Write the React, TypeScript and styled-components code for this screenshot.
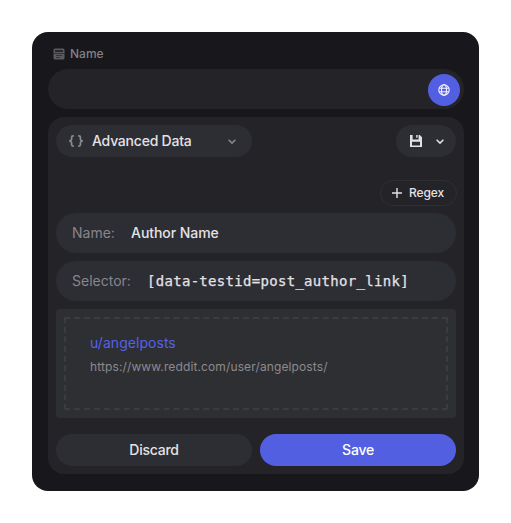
import React from "react";
import styled, { createGlobalStyle } from "styled-components";

const GlobalStyle = createGlobalStyle`
  * { box-sizing: border-box; }
  body { margin: 0; background: #fff; }
  button, input { font: inherit; color: inherit; border: 0; padding: 0; margin: 0; }
`;

const Page = styled.main`
  padding: 32px;
  font-family: Inter, "Open Sans", sans-serif;
  font-size: 14px;
  font-weight: 500;
  line-height: 20px;
  color: #e2e2e4;
`;

const Card = styled.section`
  width: 447px;
  height: 459px;
  padding: 12px 15px 17px 16px;
  border-radius: 16px;
  background: #18171c;
`;

const FieldLabel = styled.label`
  display: flex;
  align-items: center;
  gap: 5px;
  height: 20px;
  margin-bottom: 5px;
  padding-left: 5px;
  font-size: 12px;
  color: #828186;
`;

const NameField = styled.div`
  display: flex;
  align-items: center;
  height: 40px;
  padding: 2px 4px 0 20px;
  border-radius: 20px;
  background: #242328;
`;

const NameInput = styled.input`
  flex: 1;
  min-width: 0;
  background: transparent;
  outline: none;
`;

const RoundButton = styled.button`
  display: grid;
  place-items: center;
  width: 32px;
  height: 32px;
  border-radius: 50%;
  background: #535fe3;
  color: #f4f4ff;
`;

const Panel = styled.div`
  height: 357px;
  margin-top: 8px;
  padding: 8px;
  border-radius: 16px;
  background: #242328;
`;

const Toolbar = styled.div`
  display: flex;
  justify-content: space-between;
`;

const Select = styled.button`
  display: flex;
  align-items: center;
  width: 196px;
  height: 32px;
  padding: 0 14px 0 12px;
  border-radius: 16px;
  background: #2d2d34;
  color: #8a898d;
`;

const SelectText = styled.span`
  flex: 1;
  margin-left: 8px;
  text-align: left;
  color: #e2e2e4;
  letter-spacing: -0.22px;
`;

const SaveMenu = styled.button`
  display: flex;
  align-items: center;
  justify-content: space-between;
  width: 60px;
  height: 32px;
  padding: 0 10px 0 12px;
  border-radius: 16px;
  background: #2d2d34;
`;

const RegexRow = styled.div`
  display: flex;
  justify-content: flex-end;
  margin: 23px -1px 7px 0;
`;

const RegexButton = styled.button`
  display: flex;
  align-items: center;
  gap: 6px;
  width: 77px;
  height: 26px;
  padding-left: 10px;
  border: 1px solid #2f2e34;
  border-radius: 13px;
  background: transparent;
  font-size: 12px;
  line-height: 16px;
  letter-spacing: -0.1px;
`;

const Row = styled.div`
  display: flex;
  align-items: center;
  gap: 16px;
  height: 40px;
  margin-bottom: 8px;
  padding: 0 16px;
  border-radius: 20px;
  background: #2d2d34;
`;

const RowLabel = styled.span<{ $width: number }>`
  width: ${(p) => p.$width}px;
  font-weight: 400;
  color: #87868b;
  white-space: nowrap;
`;

const RowValue = styled.span`
  letter-spacing: -0.05px;
`;

const Code = styled.code`
  font-family: "DejaVu Sans Mono", monospace;
  font-size: 14px;
  letter-spacing: 0.3px;
  white-space: nowrap;
  -webkit-text-stroke: 0.25px currentColor;
`;

const Preview = styled.div`
  height: 109px;
  padding: 8px;
  border-radius: 4px;
  background: #2e2f33;
`;

const PreviewFrame = styled.div`
  height: 93px;
  padding: 14px 24px;
  border: 2px dashed #3b3b40;
  border-radius: 2px;
`;

const AuthorLink = styled.div`
  font-weight: 400;
  line-height: 20px;
  letter-spacing: 0.04px;
  color: #5661e8;
`;

const Address = styled.div`
  margin-top: 5px;
  font-size: 12px;
  line-height: 18px;
  font-weight: 400;
  letter-spacing: 0.12px;
  color: #8b8b8f;
`;

const Actions = styled.div`
  display: grid;
  grid-template-columns: 1fr 1fr;
  gap: 8px;
  margin-top: 16px;
`;

const ActionButton = styled.button<{ $primary?: boolean }>`
  height: 32px;
  border-radius: 16px;
  letter-spacing: -0.25px;
  background: ${(p) => (p.$primary ? "#535fe1" : "#2d2d34")};
  color: ${(p) => (p.$primary ? "#fff" : "#e2e2e4")};
`;

const FormIcon = () => (
  <svg width="12" height="12" viewBox="0 0 12 12" fill="none">
    <rect x="0.5" y="0.5" width="11" height="11" rx="1.5" fill="#5b5a5f" />
    <path d="M2 2h8v2H2zM0.5 5.2h11v0.7H0.5zM3 7.2h6v0.8H3zM3 9.2h4v0.8H3z" fill="#29282d" />
  </svg>
);

const GlobeIcon = () => (
  <svg width="12" height="12" viewBox="0 0 12 12" fill="none" stroke="currentColor" strokeWidth="1.1">
    <circle cx="6" cy="6" r="5.2" />
    <ellipse cx="6" cy="6" rx="2.5" ry="5.2" />
    <path d="M1.3 4.2h9.4M1.3 7.8h9.4" />
  </svg>
);

const BracesIcon = () => (
  <svg width="16" height="14" viewBox="0 0 16 14" fill="none" stroke="currentColor" strokeWidth="1.7">
    <path d="M5.8 1.9H5Q3.6 1.9 3.6 3.2V5Q3.6 6.6 1.3 7Q3.6 7.4 3.6 9V10.8Q3.6 12.1 5 12.1H5.8" />
    <path d="M10.2 1.9H11Q12.4 1.9 12.4 3.2V5Q12.4 6.6 14.7 7Q12.4 7.4 12.4 9V10.8Q12.4 12.1 11 12.1H10.2" />
  </svg>
);

const ChevronIcon = () => (
  <svg width="12" height="12" viewBox="0 0 12 12" fill="none" stroke="currentColor" strokeWidth="1.5">
    <path d="M2.6 4.8L6 8.1L9.4 4.8" />
  </svg>
);

const DiskIcon = () => (
  <svg width="16" height="16" viewBox="0 0 16 16" fill="currentColor">
    <path
      fillRule="evenodd"
      d="M2 2H4.6V6.4H10.6V2H11.8L14 4.2V14H2ZM4 8.8V12.5H12V8.8Z"
    />
    <path d="M8.2 2h1.4v2.8H8.2z" />
  </svg>
);

const PlusIcon = () => (
  <svg width="12" height="12" viewBox="0 0 12 12" stroke="currentColor" strokeWidth="1.4">
    <path d="M6 1v10M1 6h10" />
  </svg>
);

export default function App() {
  return (
    <Page>
      <GlobalStyle />
      <Card>
        <FieldLabel htmlFor="name">
          <FormIcon />
          Name
        </FieldLabel>
        <NameField>
          <NameInput id="name" />
          <RoundButton><GlobeIcon /></RoundButton>
        </NameField>
        <Panel>
          <Toolbar>
            <Select>
              <BracesIcon />
              <SelectText>Advanced Data</SelectText>
              <ChevronIcon />
            </Select>
            <SaveMenu>
              <DiskIcon />
              <ChevronIcon />
            </SaveMenu>
          </Toolbar>
          <RegexRow>
            <RegexButton>
              <PlusIcon />
              Regex
            </RegexButton>
          </RegexRow>
          <Row>
            <RowLabel $width={43}>Name:</RowLabel>
            <RowValue>Author Name</RowValue>
          </Row>
          <Row>
            <RowLabel $width={59}>Selector:</RowLabel>
            <Code>[data-testid=post_author_link]</Code>
          </Row>
          <Preview>
            <PreviewFrame>
              <AuthorLink>u/angelposts</AuthorLink>
              <Address>https://www.reddit.com/user/angelposts/</Address>
            </PreviewFrame>
          </Preview>
          <Actions>
            <ActionButton>Discard</ActionButton>
            <ActionButton $primary>Save</ActionButton>
          </Actions>
        </Panel>
      </Card>
    </Page>
  );
}
